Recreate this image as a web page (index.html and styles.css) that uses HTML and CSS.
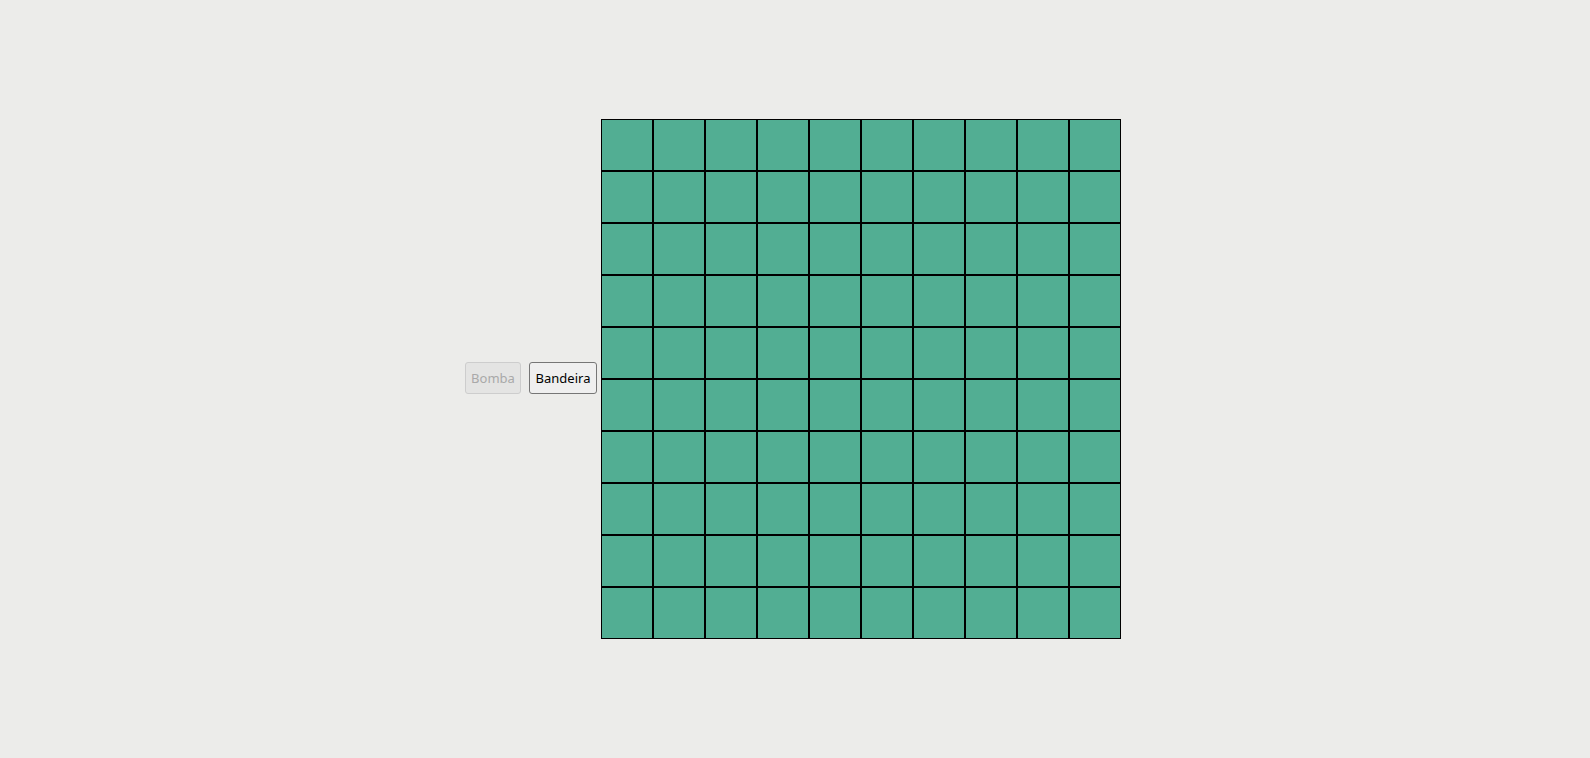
FILE: index.html
```html
<!DOCTYPE html>
<html lang="pt">
<head>
<meta charset="utf-8">
<title>Campo Minado</title>
<link rel="stylesheet" href="styles.css">
</head>
<body>
<main class="game">
  <div class="controls">
    <button class="btn btn-bomb" disabled>Bomba</button>
    <button class="btn btn-flag">Bandeira</button>
  </div>
  <div class="board" id="board"></div>
</main>
<script>
  const board = document.getElementById('board');
  for (let i = 0; i < 100; i++) {
    const c = document.createElement('div');
    c.className = 'cell';
    board.appendChild(c);
  }
</script>
</body>
</html>
```
FILE: styles.css
```css
html, body {
  margin: 0;
  padding: 0;
  height: 100%;
}
body {
  background: #ececea;
  font-family: "Noto Sans", "Open Sans", sans-serif;
}
.game {
  height: 100%;
  display: flex;
  align-items: center;
  justify-content: center;
  gap: 4px;
  padding-right: 4px;
  box-sizing: border-box;
}
.controls {
  display: flex;
  gap: 8px;
  margin-bottom: 2px;
}
.btn {
  box-sizing: border-box;
  height: 32px;
  padding: 0;
  font-family: "Noto Sans", sans-serif;
  font-size: 13px;
  color: #000;
  background: #efefef;
  border: 1px solid #767676;
  border-radius: 3px;
}
.btn-bomb { width: 56px; }
.btn-flag { width: 68px; }
.btn:disabled {
  color: #a9a9a9;
  background: #e4e4e3;
  border-color: #cdcdcd;
}
.board {
  display: grid;
  grid-template-columns: repeat(10, 52px);
  grid-auto-rows: 52px;
}
.cell {
  background: #52ae93;
  border: 1px solid #000;
}
```
